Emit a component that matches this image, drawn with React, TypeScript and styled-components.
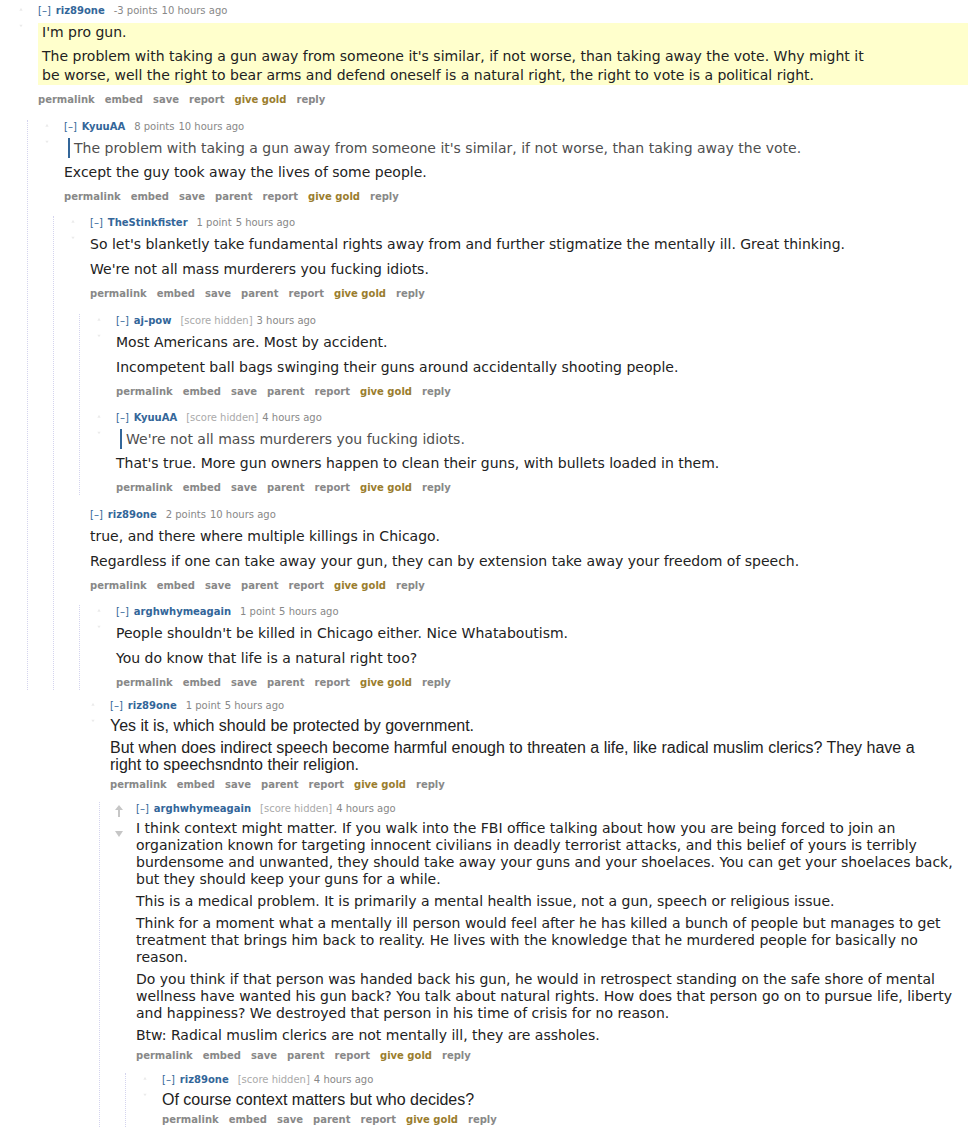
import React from "react";
import styled, { createGlobalStyle } from "styled-components";

const GlobalStyle = createGlobalStyle`
  html, body {
    margin: 0;
    background: #fff;
  }
  body {
    font-family: "DejaVu Sans", Verdana, sans-serif;
    color: #222;
  }
`;

type Face = "verdana" | "arial";
type Vote = "none" | "faint" | "marked";

interface CommentData {
  author: string;
  score: string;
  hidden?: boolean;
  time: string;
  quote?: string;
  paras: string[];
  parent?: boolean;
  highlight?: boolean;
  face?: Face;
  vote?: Vote;
  replies?: CommentData[];
}

const Page = styled.div`
  padding: 4px 2px 0 12px;
`;

const Thread = styled.div<{ $offset: number; $pull: number }>`
  margin-left: ${(p) => p.$offset}px;
  margin-top: ${(p) => p.$pull}px;
`;

const CommentBox = styled.div``;

const Row = styled.div<{ $dense: boolean }>`
  display: flex;
  margin-bottom: ${(p) => (p.$dense ? 10 : 12.5)}px;
`;

const VoteCol = styled.div`
  width: 26px;
  flex: none;
  display: flex;
  flex-direction: column;
  align-items: center;
  padding: 3px 8px 0 0;
  box-sizing: border-box;
  gap: 12px;
`;

const Entry = styled.div`
  flex: 1;
  min-width: 0;
`;

const Children = styled.div`
  margin-left: 15px;
  padding-left: 10px;
  border-left: 1px dotted #d4d4ee;
`;

const Tagline = styled.p`
  margin: 0;
  font-family: "DejaVu Sans", Verdana, sans-serif;
  font-size: 10px;
  line-height: 14px;
  color: #888;
  white-space: nowrap;
`;

const Expand = styled.span`
  color: #369;
  margin-right: 5px;
`;

const Author = styled.span`
  color: #369;
  font-weight: bold;
  margin-right: 9px;
`;

const Score = styled.span<{ $hidden?: boolean }>`
  color: ${(p) => (p.$hidden ? "#aaa" : "#888")};
  margin-right: 4px;
`;

const Body = styled.div<{ $dense: boolean; $highlight?: boolean }>`
  margin-top: ${(p) => (p.$highlight ? 5 : 4)}px;
  padding-left: ${(p) => (p.$highlight ? 4 : 0)}px;
  background: ${(p) => (p.$highlight ? "#ffffcc" : "transparent")};
  display: flex;
  flex-direction: column;
  gap: 5px;
`;

const Para = styled.p<{ $face: Face; $dense: boolean; $highlight?: boolean }>`
  margin: 0;
  max-width: ${(p) => (p.$face === "arial" ? 820 : 840)}px;
  font-family: ${(p) =>
    p.$face === "arial"
      ? `"Liberation Sans", Arial, sans-serif`
      : `"DejaVu Sans", Verdana, sans-serif`};
  font-size: ${(p) => (p.$face === "arial" ? 16 : 14)}px;
  line-height: ${(p) => (p.$dense ? 17 : p.$highlight ? 19 : 20)}px;
  color: #222;
`;

const Quote = styled.blockquote`
  margin: 0 0 -1px 4px;
  padding-left: 4px;
  border-left: 2px solid #369;
  color: #4f4f4f;
  font-size: 14px;
  line-height: 20px;
  max-width: 840px;
`;

const Actions = styled.ul<{ $dense: boolean }>`
  list-style: none;
  margin: ${(p) => (p.$dense ? 5 : 8)}px 0 0;
  padding: 0;
  display: flex;
  gap: 10px;
  font-family: "DejaVu Sans", Verdana, sans-serif;
  font-size: 10px;
  font-weight: bold;
  line-height: 14px;
`;

const Action = styled.li<{ $gold?: boolean }>`
  color: ${(p) => (p.$gold ? "#9a7d2e" : "#888")};
`;

const Arrow = ({ down, tone }: { down?: boolean; tone: Vote }) => {
  const fill = tone === "marked" ? "#c6c6c6" : "#ebebeb";
  const big = tone === "marked";
  return (
    <svg width={big ? 10 : 6} height={big ? 12 : 5} viewBox="0 0 10 12">
      {down ? (
        <path d="M1 2 L9 2 L5 8 Z" fill={fill} />
      ) : big ? (
        <path d="M5 0 L9 5 L6 5 L6 12 L4 12 L4 5 L1 5 Z" fill={fill} />
      ) : (
        <path d="M5 2 L9 9 L1 9 Z" fill={fill} />
      )}
    </svg>
  );
};

const Comment = ({ c, dense }: { c: CommentData; dense: boolean }) => {
  const face = c.face ?? "verdana";
  const vote = c.vote ?? "faint";
  const actions = ["permalink", "embed", "save"];
  if (c.parent !== false) actions.push("parent");
  actions.push("report");
  return (
    <CommentBox>
      <Row $dense={dense}>
        <VoteCol>
          {vote !== "none" && (
            <>
              <Arrow tone={vote} />
              <Arrow tone={vote} down />
            </>
          )}
        </VoteCol>
        <Entry>
          <Tagline>
            <Expand>[–]</Expand>
            <Author>{c.author}</Author>
            <Score $hidden={c.hidden}>{c.score}</Score>
            {c.time}
          </Tagline>
          <Body $dense={dense} $highlight={c.highlight}>
            {c.quote && <Quote>{c.quote}</Quote>}
            {c.paras.map((t, i) => (
              <Para key={i} $face={face} $dense={dense} $highlight={c.highlight}>
                {t}
              </Para>
            ))}
          </Body>
          <Actions $dense={dense}>
            {actions.map((a) => (
              <Action key={a}>{a}</Action>
            ))}
            <Action $gold>give gold</Action>
            <Action>reply</Action>
          </Actions>
        </Entry>
      </Row>
      {c.replies && (
        <Children>
          {c.replies.map((r, i) => (
            <Comment key={i} c={r} dense={dense} />
          ))}
        </Children>
      )}
    </CommentBox>
  );
};

const upper: CommentData = {
  author: "riz89one",
  score: "-3 points",
  time: "10 hours ago",
  highlight: true,
  parent: false,
  paras: [
    "I'm pro gun.",
    "The problem with taking a gun away from someone it's similar, if not worse, than taking away the vote. Why might it be worse, well the right to bear arms and defend oneself is a natural right, the right to vote is a political right.",
  ],
  replies: [
    {
      author: "KyuuAA",
      score: "8 points",
      time: "10 hours ago",
      quote:
        "The problem with taking a gun away from someone it's similar, if not worse, than taking away the vote.",
      paras: ["Except the guy took away the lives of some people."],
      replies: [
        {
          author: "TheStinkfister",
          score: "1 point",
          time: "5 hours ago",
          paras: [
            "So let's blanketly take fundamental rights away from and further stigmatize the mentally ill. Great thinking.",
            "We're not all mass murderers you fucking idiots.",
          ],
          replies: [
            {
              author: "aj-pow",
              score: "[score hidden]",
              hidden: true,
              time: "3 hours ago",
              paras: [
                "Most Americans are. Most by accident.",
                "Incompetent ball bags swinging their guns around accidentally shooting people.",
              ],
            },
            {
              author: "KyuuAA",
              score: "[score hidden]",
              hidden: true,
              time: "4 hours ago",
              quote: "We're not all mass murderers you fucking idiots.",
              paras: [
                "That's true. More gun owners happen to clean their guns, with bullets loaded in them.",
              ],
            },
          ],
        },
        {
          author: "riz89one",
          score: "2 points",
          time: "10 hours ago",
          vote: "none",
          paras: [
            "true, and there where multiple killings in Chicago.",
            "Regardless if one can take away your gun, they can by extension take away your freedom of speech.",
          ],
          replies: [
            {
              author: "arghwhymeagain",
              score: "1 point",
              time: "5 hours ago",
              paras: [
                "People shouldn't be killed in Chicago either. Nice Whataboutism.",
                "You do know that life is a natural right too?",
              ],
            },
          ],
        },
      ],
    },
  ],
};

const lower: CommentData = {
  author: "riz89one",
  score: "1 point",
  time: "5 hours ago",
  face: "arial",
  paras: [
    "Yes it is, which should be protected by government.",
    "But when does indirect speech become harmful enough to threaten a life, like radical muslim clerics? They have a right to speechsndnto their religion.",
  ],
  replies: [
    {
      author: "arghwhymeagain",
      score: "[score hidden]",
      hidden: true,
      time: "4 hours ago",
      vote: "marked",
      paras: [
        "I think context might matter. If you walk into the FBI office talking about how you are being forced to join an organization known for targeting innocent civilians in deadly terrorist attacks, and this belief of yours is terribly burdensome and unwanted, they should take away your guns and your shoelaces. You can get your shoelaces back, but they should keep your guns for a while.",
        "This is a medical problem. It is primarily a mental health issue, not a gun, speech or religious issue.",
        "Think for a moment what a mentally ill person would feel after he has killed a bunch of people but manages to get treatment that brings him back to reality. He lives with the knowledge that he murdered people for basically no reason.",
        "Do you think if that person was handed back his gun, he would in retrospect standing on the safe shore of mental wellness have wanted his gun back? You talk about natural rights. How does that person go on to pursue life, liberty and happiness? We destroyed that person in his time of crisis for no reason.",
        "Btw: Radical muslim clerics are not mentally ill, they are assholes.",
      ],
      replies: [
        {
          author: "riz89one",
          score: "[score hidden]",
          hidden: true,
          time: "4 hours ago",
          face: "arial",
          paras: ["Of course context matters but who decides?"],
        },
      ],
    },
  ],
};

export default function App() {
  return (
    <>
      <GlobalStyle />
      <Page>
        <Thread $offset={0} $pull={0}>
          <Comment c={upper} dense={false} />
        </Thread>
        <Thread $offset={72} $pull={-4}>
          <Comment c={lower} dense />
        </Thread>
      </Page>
    </>
  );
}
